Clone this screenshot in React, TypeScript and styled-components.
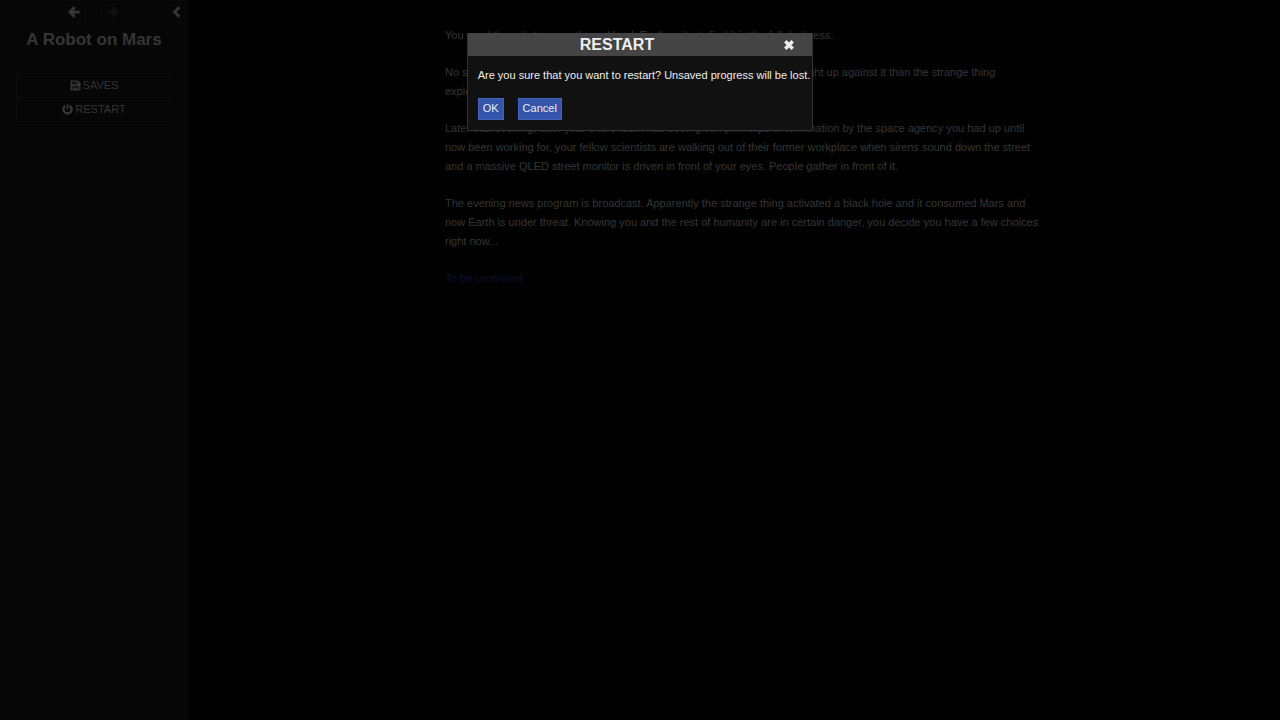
import React from "react";
import styled, { createGlobalStyle } from "styled-components";

const GlobalStyle = createGlobalStyle`
  * { box-sizing: border-box; }
  body {
    margin: 0;
    background: #010101;
    color: #353535;
    font: 11px/19px "Liberation Sans", Arial, sans-serif;
  }
  button { font: inherit; color: inherit; cursor: pointer; }
`;

const Page = styled.div`
  display: flex;
  min-height: 100vh;
`;

const Sidebar = styled.aside`
  flex: 0 0 188px;
  background: #060606;
  text-align: center;
`;

const HistoryBar = styled.div`
  display: flex;
  justify-content: flex-end;
  height: 23px;
`;

const HistoryButton = styled.button<{ $faded?: boolean; $gap?: number }>`
  display: flex;
  align-items: center;
  justify-content: center;
  width: 24px;
  padding: 0;
  margin-right: ${(p) => p.$gap ?? 0}px;
  border: 1px solid #090909;
  background: none;
  color: ${(p) => (p.$faded ? "#101010" : "#353535")};
`;

const StoryTitle = styled.h1`
  margin: 6px 0 23px;
  font-size: 17px;
  line-height: 21px;
`;

const Menu = styled.ul`
  list-style: none;
  margin: 0 16px;
  padding: 0;
  border: 1px solid #0a0a0a;
`;

const MenuItem = styled.li`
  & + & { border-top: 1px solid #0a0a0a; }
`;

const MenuButton = styled.button`
  display: flex;
  align-items: center;
  justify-content: center;
  gap: 2px;
  width: 100%;
  height: 23px;
  padding: 0;
  border: 0;
  background: none;
  text-transform: uppercase;
`;

const Story = styled.main`
  flex: 1;
  padding: 26px 40px 26px 60px;
`;

const Passage = styled.article`
  width: 100%;
  max-width: 598px;
  margin: 0 auto;
`;

const Paragraph = styled.p`
  margin: 0 0 18px;
`;

const StoryLink = styled.a`
  color: #0b1230;
  text-decoration: none;
`;

const Overlay = styled.div`
  position: fixed;
  inset: 0;
  display: flex;
  align-items: flex-start;
  justify-content: center;
  padding-top: 33px;
`;

const Dialog = styled.section`
  border: 1px solid #333;
  border-top-color: #444;
  background: #111;
  color: #eee;
`;

const DialogHeader = styled.header`
  display: flex;
  align-items: center;
  height: 22px;
  background: #444;
`;

const DialogTitle = styled.h2`
  flex: 1;
  margin: 0;
  font-size: 16px;
  line-height: 20px;
  text-align: center;
`;

const CloseButton = styled.button`
  display: flex;
  align-items: center;
  justify-content: center;
  width: 46px;
  height: 20px;
  padding: 0;
  border: 0;
  background: none;
`;

const DialogBody = styled.div`
  padding: 10px 2px 10px 10px;
`;

const Message = styled.p`
  margin: 0 0 13px;
`;

const Actions = styled.div`
  display: flex;
  gap: 14px;
`;

const ActionButton = styled.button`
  height: 22px;
  padding: 0 4px 2px;
  border: 1px solid #4363c3;
  background: #3354a8;
  line-height: 18px;
`;

const ArrowIcon = ({ flip }: { flip?: boolean }) => (
  <svg width="12" height="12" viewBox="0 0 12 12" fill="currentColor" aria-hidden="true">
    <path
      transform={flip ? "matrix(-1 0 0 1 12 0)" : undefined}
      d="M6.1.6 7.3 1.8Q7.7 2.3 7.3 2.8L5.6 4.7H11Q11.7 4.7 11.7 5.5V6.6Q11.7 7.4 11 7.4H5.6L7.3 9.2Q7.7 9.7 7.3 10.2L6.1 11.4Q5.7 11.7 5.2 11.4L.4 6.5Q0 6 .4 5.5L5.2.6Q5.7.3 6.1.6Z"
    />
  </svg>
);

const ChevronIcon = () => (
  <svg width="10" height="12" viewBox="0 0 10 12" aria-hidden="true">
    <path d="M8.4 1.2 3.6 6l4.8 4.8" fill="none" stroke="currentColor" strokeWidth="3" />
  </svg>
);

const SaveIcon = () => (
  <svg width="11" height="11" viewBox="0 0 11 11" aria-hidden="true">
    <path
      fill="currentColor"
      fillRule="evenodd"
      d="M1.2.5H8L10.5 3v6.3q0 1.2-1.2 1.2H1.2Q.5 10.5.5 9.8V1.2Q.5.5 1.2.5ZM2.5 1.6v2.6h4.8V1.6H6.4v1.6H5V1.6ZM2.4 6.3v3h1V7.4h4.2v1.9h1v-3Z"
    />
  </svg>
);

const PowerIcon = () => (
  <svg width="11" height="11" viewBox="0 0 11 11" fill="none" stroke="currentColor" aria-hidden="true">
    <path d="M3.2 1.9A4.1 4.1 0 1 0 7.8 1.9" strokeWidth="2.5" />
    <path d="M5.5.3V5.4" strokeWidth="1.8" />
  </svg>
);

const CloseIcon = () => (
  <svg width="12" height="12" viewBox="0 0 12 12" aria-hidden="true">
    <path d="M2.3 2.3 9.7 9.7M9.7 2.3 2.3 9.7" stroke="currentColor" strokeWidth="3.4" />
  </svg>
);

export default function App() {
  return (
    <>
      <GlobalStyle />
      <Page>
        <Sidebar>
          <HistoryBar>
            <HistoryButton aria-label="Go back" $gap={15}><ArrowIcon /></HistoryButton>
            <HistoryButton aria-label="Go forward" $gap={39} $faded><ArrowIcon flip /></HistoryButton>
            <HistoryButton aria-label="Toggle sidebar"><ChevronIcon /></HistoryButton>
          </HistoryBar>
          <StoryTitle>A Robot on Mars</StoryTitle>
          <Menu>
            <MenuItem><MenuButton><SaveIcon />Saves</MenuButton></MenuItem>
            <MenuItem><MenuButton><PowerIcon />Restart</MenuButton></MenuItem>
          </Menu>
        </Sidebar>
        <Story>
          <Passage>
            <Paragraph>You send the robot across the red land. Earth waits to find it in the full darkness.</Paragraph>
            <Paragraph>No sooner than the robot has reached the crash site and is now standing right up against it than the strange thing explodes.</Paragraph>
            <Paragraph>Later that evening, after your entire team has been given pink slips of termination by the space agency you had up until now been working for, your fellow scientists are walking out of their former workplace when sirens sound down the street and a massive QLED street monitor is driven in front of your eyes. People gather in front of it.</Paragraph>
            <Paragraph>The evening news program is broadcast. Apparently the strange thing activated a black hole and it consumed Mars and now Earth is under threat. Knowing you and the rest of humanity are in certain danger, you decide you have a few choices right now...</Paragraph>
            <StoryLink href="#continue">To be continued</StoryLink>
          </Passage>
        </Story>
      </Page>
      <Overlay>
        <Dialog role="dialog" aria-modal="true" aria-labelledby="dialog-title">
          <DialogHeader>
            <DialogTitle id="dialog-title">RESTART</DialogTitle>
            <CloseButton aria-label="Close"><CloseIcon /></CloseButton>
          </DialogHeader>
          <DialogBody>
            <Message>Are you sure that you want to restart? Unsaved progress will be lost.</Message>
            <Actions>
              <ActionButton>OK</ActionButton>
              <ActionButton>Cancel</ActionButton>
            </Actions>
          </DialogBody>
        </Dialog>
      </Overlay>
    </>
  );
}
